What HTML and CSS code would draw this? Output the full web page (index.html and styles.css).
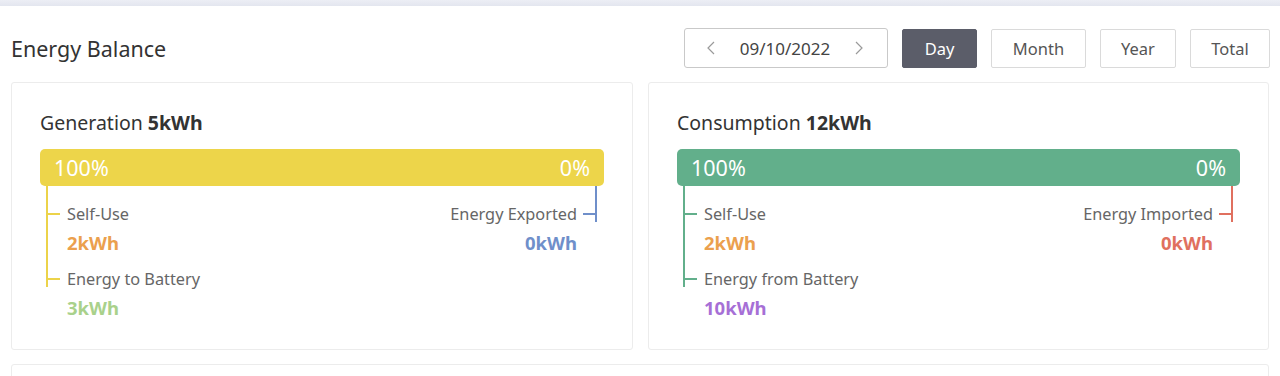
FILE: index.html
```html
<!DOCTYPE html>
<html lang="en">
<head>
  <meta charset="UTF-8">
  <title>Energy Balance</title>
  <link rel="stylesheet" href="styles.css">
</head>
<body>
  <div class="topbar"></div>

  <div class="page">
    <div class="header">
      <h1>Energy Balance</h1>

      <div class="controls">
        <div class="date-picker">
          <svg class="chev" width="8" height="14" viewBox="0 0 8 14"><polyline points="7,1 1,7 7,13" /></svg>
          <span class="date">09/10/2022</span>
          <svg class="chev" width="8" height="14" viewBox="0 0 8 14"><polyline points="1,1 7,7 1,13" /></svg>
        </div>
        <button class="btn btn-day active">Day</button>
        <button class="btn btn-month">Month</button>
        <button class="btn btn-year">Year</button>
        <button class="btn btn-total">Total</button>
      </div>
    </div>

    <div class="cards">
      <div class="card generation">
        <h2>Generation <b>5kWh</b></h2>
        <div class="bar">
          <span>100%</span>
          <span>0%</span>
        </div>
        <div class="tree">
          <div class="branch left">
            <div class="item">
              <div class="label">Self-Use</div>
              <div class="value orange">2kWh</div>
            </div>
            <div class="item">
              <div class="label">Energy to Battery</div>
              <div class="value lightgreen">3kWh</div>
            </div>
          </div>
          <div class="branch right">
            <div class="item">
              <div class="label">Energy Exported</div>
              <div class="value blue">0kWh</div>
            </div>
          </div>
        </div>
      </div>

      <div class="card consumption">
        <h2>Consumption <b>12kWh</b></h2>
        <div class="bar">
          <span>100%</span>
          <span>0%</span>
        </div>
        <div class="tree">
          <div class="branch left">
            <div class="item">
              <div class="label">Self-Use</div>
              <div class="value orange">2kWh</div>
            </div>
            <div class="item">
              <div class="label">Energy from Battery</div>
              <div class="value purple">10kWh</div>
            </div>
          </div>
          <div class="branch right">
            <div class="item">
              <div class="label">Energy Imported</div>
              <div class="value red">0kWh</div>
            </div>
          </div>
        </div>
      </div>
    </div>

    <div class="card next"></div>
  </div>
</body>
</html>
```

FILE: styles.css
```css
* {
  margin: 0;
  padding: 0;
  box-sizing: border-box;
  font-family: 'Noto Sans', sans-serif;
}

body {
  background: #fff;
  color: #333;
  overflow: hidden;
}

.topbar {
  height: 6px;
  background: linear-gradient(#eceef5, #e3e6ef);
}

.page {
  padding: 22px 11px 0;
}

.header {
  display: flex;
  justify-content: space-between;
  align-items: center;
  height: 40px;
  margin-right: -1px;
  margin-bottom: 14px;
}

h1 {
  font-size: 21.5px;
  font-weight: 400;
  color: #333;
  line-height: 28px;
  margin-top: 1px;
}

.controls {
  display: flex;
  align-items: center;
  gap: 14px;
}

.date-picker {
  display: flex;
  align-items: center;
  justify-content: space-between;
  width: 204px;
  height: 40px;
  padding: 0 24px 0 22px;
  border: 1px solid #c9c9c9;
  border-radius: 3px;
}

.chev polyline {
  fill: none;
  stroke: #9a9a9a;
  stroke-width: 1.2;
}

.date {
  font-size: 17px;
  color: #444;
}

.btn {
  height: 39px;
  font-size: 16.5px;
  color: #555;
  background: #fff;
  border: 1px solid #dadada;
  border-radius: 2px;
  cursor: pointer;
}

.btn-day { width: 75px; }
.btn-month { width: 95px; }
.btn-year { width: 76px; }
.btn-total { width: 80px; }

.btn.active {
  background: #5b5d69;
  border-color: #5b5d69;
  color: #fff;
}

.cards {
  display: grid;
  grid-template-columns: 622px 621px;
  gap: 15px;
}

.card {
  border: 1px solid #ececec;
  border-radius: 3px;
  background: #fff;
}

.card.generation,
.card.consumption {
  height: 268px;
  padding: 27px 28px 0 28px;
}

.card h2 {
  font-size: 19.5px;
  font-weight: 400;
  line-height: 26px;
  color: #333;
  margin-bottom: 13px;
}

.card h2 b {
  font-weight: 700;
}

.bar {
  display: flex;
  justify-content: space-between;
  align-items: center;
  height: 37px;
  padding: 0 14px;
  border-radius: 5px;
  color: #fff;
  font-size: 21.5px;
}

.generation .bar { background: #edd54a; }
.consumption .bar { background: #62af8b; }

.tree {
  display: flex;
  justify-content: space-between;
  align-items: flex-start;
}

.branch {
  position: relative;
  padding-top: 17px;
}

.branch::before {
  content: "";
  position: absolute;
  top: 0;
  bottom: 33px;
  width: 2px;
}

.branch.left {
  margin-left: 6px;
  padding-left: 21px;
}

.branch.left::before { left: 0; }

.branch.right {
  margin-right: 7px;
  padding-right: 20px;
  text-align: right;
}

.branch.right::before { right: 0; }

.item + .item {
  margin-top: 13px;
}

.label {
  position: relative;
  font-size: 16.3px;
  line-height: 22px;
  color: #666;
}

.label::before {
  content: "";
  position: absolute;
  top: 10px;
  width: 14px;
  height: 2px;
}

.left .label::before { left: -21px; }
.right .label::before { right: -20px; }

.value {
  font-size: 18.5px;
  font-weight: 700;
  line-height: 24px;
  margin-top: 6px;
}

.generation .left::before,
.generation .left .label::before { background: #ecd34a; }
.generation .right::before,
.generation .right .label::before { background: #6f8fca; }
.consumption .left::before,
.consumption .left .label::before { background: #62af8b; }
.consumption .right::before,
.consumption .right .label::before { background: #e0705f; }

.orange { color: #eba04e; }
.lightgreen { color: #a9d18b; }
.blue { color: #6f8fca; }
.red { color: #e0705f; }
.purple { color: #a66fd6; }

.card.next {
  margin-top: 14px;
  height: 100px;
}
```
